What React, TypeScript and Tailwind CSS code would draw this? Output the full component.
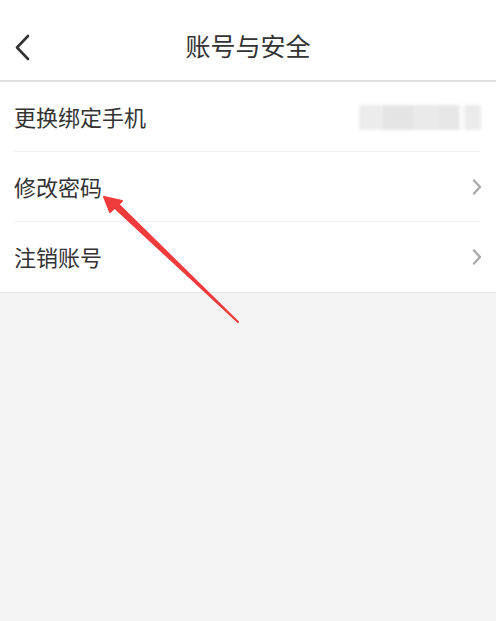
import React from "react";

const font = { fontFamily: '"Noto Sans CJK SC", "Noto Sans", sans-serif' };

function Chevron() {
  return (
    <svg width="12" height="16" viewBox="0 0 12 16" className="shrink-0">
      <path d="M3 1.5 L9 8 L3 14.5" fill="none" stroke="#aaaaaa" strokeWidth="2.4" strokeLinecap="round" strokeLinejoin="round" />
    </svg>
  );
}

function Row({ label, right, border }: { label: string; right: React.ReactNode; border: boolean }) {
  return (
    <div className="h-[70px] pl-[14px] pr-[13px] flex items-center justify-between relative">
      <span className="text-[22px] text-[#333] leading-none -mt-[3px]">{label}</span>
      {right}
      {border && <div className="absolute left-[14px] right-[16px] bottom-0 h-px bg-[#eeeeee]" />}
    </div>
  );
}

function BlurredPhone() {
  return (
    <div className="flex h-[25px] w-[122px] mr-[2px] blur-[1.5px]">
      <div className="w-[24px] bg-[#ececec]" />
      <div className="w-[30px] bg-[#e4e4e4]" />
      <div className="w-[26px] bg-[#eaeaea]" />
      <div className="w-[20px] bg-[#e6e6e6]" />
      <div className="w-[6px] bg-[#fafafa]" />
      <div className="w-[16px] bg-[#ebebeb]" />
    </div>
  );
}

export default function App() {
  return (
    <div className="w-[504px] h-[621px] bg-white overflow-hidden relative" style={font}>
      <div className="w-[496px] h-full bg-[#f4f4f4] flex flex-col">
        <div className="h-[82px] bg-white border-b-2 border-[#e0e0e0] flex items-center relative">
          <svg width="18" height="28" viewBox="0 0 18 28" className="absolute left-[13px] top-[34px]">
            <path d="M15 2 L4 13.5 L15 25" fill="none" stroke="#333" strokeWidth="2.6" strokeLinecap="round" strokeLinejoin="round" />
          </svg>
          <div className="flex-1 text-center text-[25px] text-[#333] leading-none mt-[10px]">账号与安全</div>
        </div>
        <div className="bg-white border-b border-[#e6e6e6]">
          <Row label="更换绑定手机" right={<BlurredPhone />} border={true} />
          <Row label="修改密码" right={<Chevron />} border={true} />
          <Row label="注销账号" right={<Chevron />} border={false} />
        </div>
      </div>
      <svg className="absolute left-0 top-0 pointer-events-none" width="504" height="621" viewBox="0 0 504 621">
        <path d="M115 208 L238 322 L119 205 Z" fill="#ef3b3b" stroke="#ef3b3b" strokeWidth="2" strokeLinejoin="round" />
        <path d="M104 197 L122 201 L110 212 Z" fill="#ef3b3b" stroke="#ef3b3b" strokeWidth="2" strokeLinejoin="round" />
      </svg>
    </div>
  );
}
